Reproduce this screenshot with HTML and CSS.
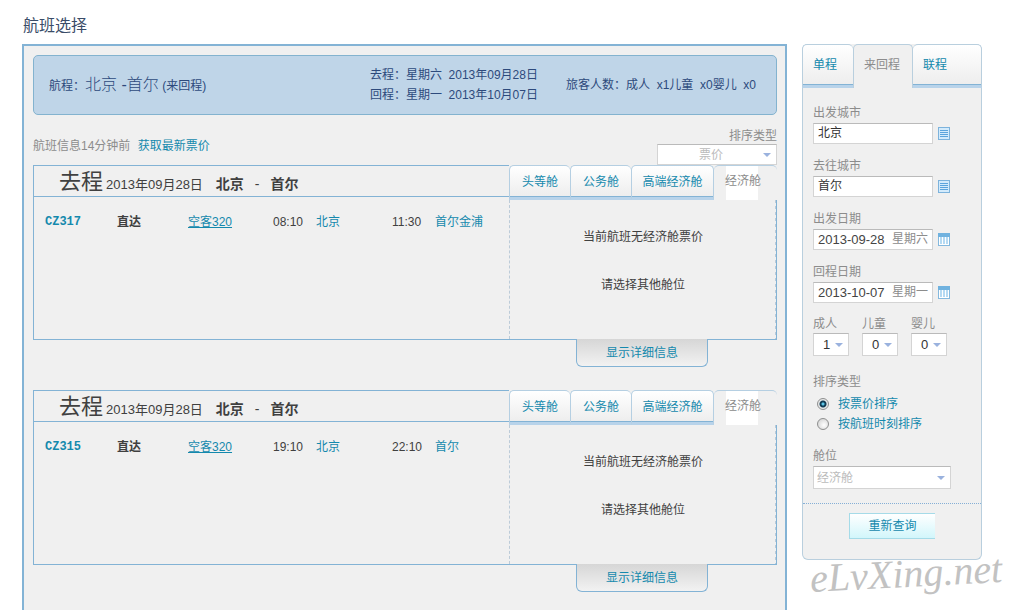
FILE: index.html
```html
<!DOCTYPE html>
<html lang="zh-CN">
<head>
	<meta charset="utf-8">
	<title>航班选择</title>
	<link rel="stylesheet" href="styles.css">
</head>
<body>
	<h1 class="title">航班选择</h1>
	<div class="page">
		<div class="main">
			<div class="summary">
				<div class="route">航程：<span class="city">北京 -首尔</span> (来回程)</div>
				<div class="dates">
					<p>去程：星期六&nbsp; 2013年09月28日</p>
					<p>回程：星期一&nbsp; 2013年10月07日</p>
				</div>
				<div class="people">旅客人数：成人&nbsp; x1儿童&nbsp; x0婴儿&nbsp; x0</div>
			</div>

			<div class="info">
				<p class="update">航班信息14分钟前 <a href="#">获取最新票价</a></p>
				<div class="sort">
					<label for="sort">排序类型</label>
					<div class="select">
						<select id="sort"><option>票价</option></select>
					</div>
				</div>
			</div>

			<div class="flight">
				<div class="card">
					<div class="left">
						<h2 class="head"><span class="way">去程</span><span class="day">2013年09月28日</span><span class="from">北京</span><span class="dash">-</span><span class="to">首尔</span></h2>
						<table class="list">
							<tr>
								<td class="c1"><a href="#" class="no">CZ317</a></td>
								<td class="c2"><b>直达</b></td>
								<td class="c3"><a href="#" class="plane">空客320</a></td>
								<td class="c4">08:10</td>
								<td class="c5"><a href="#">北京</a></td>
								<td class="c4">11:30</td>
								<td><a href="#">首尔金浦</a></td>
							</tr>
						</table>
					</div>
					<div class="right">
						<div class="cabin">
							<button type="button">头等舱</button>
							<button type="button">公务舱</button>
							<button type="button" class="wide">高端经济舱</button>
							<button type="button" class="on"><span>经济舱</span></button>
						</div>
						<div class="empty">
							<p>当前航班无经济舱票价</p>
							<p>请选择其他舱位</p>
						</div>
					</div>
				</div>
				<button type="button" class="detail">显示详细信息</button>
			</div>

			<div class="flight">
				<div class="card">
					<div class="left">
						<h2 class="head"><span class="way">去程</span><span class="day">2013年09月28日</span><span class="from">北京</span><span class="dash">-</span><span class="to">首尔</span></h2>
						<table class="list">
							<tr>
								<td class="c1"><a href="#" class="no">CZ315</a></td>
								<td class="c2"><b>直达</b></td>
								<td class="c3"><a href="#" class="plane">空客320</a></td>
								<td class="c4">19:10</td>
								<td class="c5"><a href="#">北京</a></td>
								<td class="c4">22:10</td>
								<td><a href="#">首尔</a></td>
							</tr>
						</table>
					</div>
					<div class="right">
						<div class="cabin">
							<button type="button">头等舱</button>
							<button type="button">公务舱</button>
							<button type="button" class="wide">高端经济舱</button>
							<button type="button" class="on"><span>经济舱</span></button>
						</div>
						<div class="empty">
							<p>当前航班无经济舱票价</p>
							<p>请选择其他舱位</p>
						</div>
					</div>
				</div>
				<button type="button" class="detail">显示详细信息</button>
			</div>
		</div>

		<div class="side">
			<form class="search">
				<div class="trip">
					<button type="button" class="t1">单程</button>
					<button type="button" class="t2 on">来回程</button>
					<button type="button" class="t3">联程</button>
				</div>
				<div class="fields">
					<div class="field">
						<label for="from">出发城市</label>
						<div class="line">
							<div class="box"><input type="text" id="from" value="北京"></div>
							<svg class="icon" width="12" height="13" viewBox="0 0 12 13"><rect x=".5" y=".5" width="11" height="12" fill="#d3ebfc" stroke="#7db3dc"/><path d="M2 3.5h8M2 5.5h8M2 7.5h8M2 9.5h8" stroke="#5ba4dc"/></svg>
						</div>
					</div>
					<div class="field">
						<label for="to">去往城市</label>
						<div class="line">
							<div class="box"><input type="text" id="to" value="首尔"></div>
							<svg class="icon" width="12" height="13" viewBox="0 0 12 13"><rect x=".5" y=".5" width="11" height="12" fill="#d3ebfc" stroke="#7db3dc"/><path d="M2 3.5h8M2 5.5h8M2 7.5h8M2 9.5h8" stroke="#5ba4dc"/></svg>
						</div>
					</div>
					<div class="field">
						<label for="go">出发日期</label>
						<div class="line">
							<div class="box"><input type="text" id="go" class="date" value="2013-09-28"><span class="week">星期六</span></div>
							<svg class="icon" width="12" height="13" viewBox="0 0 12 13"><rect x=".5" y=".5" width="11" height="12" fill="#fff" stroke="#85b9de"/><path d="M0 0h12v4H0z" fill="#70b2df"/><path d="M2 4h2v7H2zM5 4h2v7H5zM8 4h2v7H8z" fill="#b5daf3"/></svg>
						</div>
					</div>
					<div class="field">
						<label for="back">回程日期</label>
						<div class="line">
							<div class="box"><input type="text" id="back" class="date" value="2013-10-07"><span class="week">星期一</span></div>
							<svg class="icon" width="12" height="13" viewBox="0 0 12 13"><rect x=".5" y=".5" width="11" height="12" fill="#fff" stroke="#85b9de"/><path d="M0 0h12v4H0z" fill="#70b2df"/><path d="M2 4h2v7H2zM5 4h2v7H5zM8 4h2v7H8z" fill="#b5daf3"/></svg>
						</div>
					</div>
					<div class="nums">
						<div>
							<label for="adult">成人</label>
							<div class="select"><select id="adult"><option>1</option></select></div>
						</div>
						<div>
							<label for="child">儿童</label>
							<div class="select"><select id="child"><option>0</option></select></div>
						</div>
						<div>
							<label for="baby">婴儿</label>
							<div class="select"><select id="baby"><option>0</option></select></div>
						</div>
					</div>
					<div class="order">
						<p>排序类型</p>
						<label><input type="radio" name="order" checked>按票价排序</label>
						<label><input type="radio" name="order">按航班时刻排序</label>
					</div>
					<div class="seat">
						<label for="seat">舱位</label>
						<div class="select"><select id="seat"><option>经济舱</option></select></div>
					</div>
				</div>
				<div class="submit"><button type="submit">重新查询</button></div>
			</form>
			<div class="mark">eLvXing.net</div>
		</div>
	</div>
</body>
</html>
```
FILE: styles.css
```css
*{
	margin: 0;
	padding: 0;
	box-sizing: border-box;
}
body{
	background: #fff;
	color: #404040;
	font: 12px/18px "Liberation Sans", "Noto Sans CJK SC", sans-serif;
	padding: 14px 34px 0 22px;
}
a{
	color: #1489ad;
	text-decoration: none;
}
button,input,select{
	font: inherit;
	color: inherit;
	border: 0;
	background: none;
}
button{
	cursor: pointer;
	color: #1489ad;
}
.title{
	font-size: 16px;
	font-weight: normal;
	line-height: 24px;
	padding-left: 1px;
	color: #3a4c68;
}
.page{
	display: flex;
	align-items: flex-start;
	gap: 15px;
	margin-top: 6px;
}
.main{
	flex: 1;
	min-width: 0;
	border: 2px solid #83b3d5;
	border-bottom: 0;
	background: #f0f0f0;
	padding: 9px 8px 0 9px;
}

/*行程概要*/
.summary{
	display: flex;
	align-items: center;
	height: 60px;
	padding: 0 20px 0 15px;
	border: 1px solid #83b3cf;
	border-radius: 5px;
	background: #bfd5e8;
	color: #2d4a7c;
}
.route{
	flex: 1;
}
.city{
	font-size: 16px;
	font-weight: 300;
}
.dates{
	line-height: 20px;
	margin-right: 28px;
}

.info{
	display: flex;
	justify-content: space-between;
	align-items: flex-start;
	height: 50px;
	color: #8c8c8c;
}
.update{
	padding-top: 22px;
}
.update a{
	margin-left: 4px;
}
.sort{
	width: 120px;
	padding-top: 13px;
}
.sort label{
	display: block;
	line-height: 16px;
	text-align: right;
}
.sort .select{
	height: 21px;
	color: #bbb;
}
.sort select{
	padding-left: 41px;
}

/*下拉框*/
.select{
	position: relative;
	border: 1px solid #d4d4d4;
	border-top-color: #bababa;
	background: #fff;
}
.select select{
	display: block;
	width: 100%;
	height: 100%;
	appearance: none;
	outline: none;
}
.select:after{
	content: "";
	position: absolute;
	right: 5px;
	top: 50%;
	margin-top: -2px;
	border: 4px solid transparent;
	border-top-color: #9ab2de;
	border-bottom: 0;
	pointer-events: none;
}

/*航班*/
.flight{
	margin-bottom: 23px;
}
.flight:last-child{
	margin-bottom: 0;
	padding-bottom: 18px;
}
.card{
	display: flex;
	height: 175px;
	border-bottom: 1px solid #83b3d5;
}
.left{
	flex: 1;
	min-width: 0;
	border-left: 1px solid #83b3d5;
	border-top: 1px solid #83b3d5;
}
.head{
	height: 31px;
	line-height: 31px;
	padding-left: 25px;
	border-bottom: 1px solid #83b3d5;
	font-size: 14px;
	white-space: nowrap;
}
.way{
	font-size: 22px;
	font-weight: normal;
	margin-right: 3px;
}
.day{
	font-size: 13px;
	font-weight: normal;
	margin-right: 13px;
}
.dash{
	margin: 0 11px;
	font-weight: normal;
}
.list{
	width: 100%;
	table-layout: fixed;
	border-collapse: collapse;
	margin-top: 15px;
	white-space: nowrap;
}
.list .c1{
	width: 83px;
	padding-left: 11px;
}
.list .c2{
	width: 71px;
}
.list .c3{
	width: 85px;
}
.list .c4{
	width: 43px;
}
.list .c5{
	width: 76px;
}
.no{
	font-family: "Liberation Mono", monospace;
	font-weight: bold;
}
.plane{
	text-decoration: underline;
}
.right{
	width: 268px;
	display: flex;
	flex-direction: column;
}
.cabin{
	display: flex;
	height: 35px;
}
.cabin button{
	width: 61px;
	border: 1px solid #b5cfe2;
	border-bottom: 3px solid #b8d3ea;
	border-right: 0;
	border-radius: 5px 5px 0 0;
	background: linear-gradient(#fff, #ededed);
	box-shadow: inset 0 -1px #83b3d5;
}
.cabin .wide{
	width: 83px;
	border-right: 1px solid #b5cfe2;
}
.cabin .on{
	flex: 1;
	border: 0;
	border-top: 1px solid #b5cfe2;
	background: linear-gradient(#fff, #fff) 12px 0 / 32px 34px no-repeat;
	box-shadow: none;
	color: #8c8c8c;
	text-align: left;
	padding: 0 0 4px 11px;
}
.empty{
	flex: 1;
	border-left: 1px dashed #bccbd8;
	border-right: 1px solid #83b3d5;
	background: repeating-linear-gradient(#bccbd8 0 3px, #f0f0f0 3px 6px) right / 1px 100% no-repeat;
	padding-top: 28px;
	text-align: center;
}
.empty p{
	margin-bottom: 30px;
}
.detail{
	display: block;
	width: 132px;
	height: 28px;
	margin: -1px 69px 0 auto;
	padding-top: 1px;
	position: relative;
	border: 1px solid #83b3d5;
	border-top: 0;
	border-radius: 0 0 6px 6px;
	background: linear-gradient(#d6d6d6, #f2f2f2);
}

/*右侧查询*/
.side{
	width: 180px;
	position: relative;
}
.search{
	background: #f0f0f0;
	border: 1px solid #b9cfde;
	border-top: 0;
	border-radius: 6px;
	color: #8c8c8c;
}
.trip{
	display: flex;
	height: 44px;
	margin: 0 -1px;
}
.trip button{
	border: 1px solid #b9cfde;
	border-bottom: 3px solid #b8d3ea;
	border-radius: 5px 5px 0 0;
	background: linear-gradient(#fff, #ededed);
	box-shadow: inset 0 -1px #83b3d5;
	text-align: left;
	padding-left: 10px;
}
.trip .t1{
	width: 51px;
	border-right: 0;
}
.trip .t2{
	width: 60px;
	background: #f0f0f0;
	border-bottom: 0;
	padding-bottom: 3px;
	box-shadow: none;
	color: #8c8c8c;
}
.trip .t3{
	flex: 1;
	border-left: 0;
}
.fields{
	padding: 15px 10px 0;
}
.field{
	margin-bottom: 12px;
}
.field label,.seat label{
	display: block;
	line-height: 20px;
}
.line{
	display: flex;
	align-items: center;
	gap: 5px;
}
.box{
	display: flex;
	width: 120px;
	height: 21px;
	border: 1px solid #d4d4d4;
	border-top-color: #bababa;
	background: #fff;
	line-height: 19px;
}
.box input{
	flex: 1;
	min-width: 0;
	padding-left: 4px;
	outline: none;
	color: #333;
}
.box .date{
	font-size: 13px;
	color: #444;
}
.box .week{
	padding-right: 4px;
}
.nums{
	display: flex;
	gap: 13px;
	margin-bottom: 16px;
}
.nums label{
	display: block;
}
.nums .select{
	width: 36px;
	height: 23px;
	color: #333;
}
.nums select{
	padding-left: 9px;
	font-size: 13px;
}
.order label{
	display: flex;
	align-items: center;
	height: 20px;
	padding-left: 4px;
	color: #1489ad;
}
.order p{
	line-height: 20px;
	margin-bottom: 2px;
}
.order input{
	appearance: none;
	width: 12px;
	height: 12px;
	margin-right: 9px;
	border: 1px solid #8e8f8f;
	border-radius: 50%;
	background: radial-gradient(circle at 60% 60%, #fff, #ccc);
}
.order input:checked{
	background: radial-gradient(circle, #5cc5e6 0 1px, #123d55 2px 3px, #e8e8e8 4px);
}
.seat{
	margin-top: 12px;
}
.seat .select{
	width: 138px;
	height: 23px;
	color: #bbb;
}
.seat select{
	padding-left: 3px;
}
.submit{
	margin-top: 14px;
	padding: 9px 0 20px;
	border-top: 1px dotted #85afd6;
	text-align: center;
}
.submit button{
	display: block;
	width: 86px;
	height: 26px;
	margin: 0 auto;
	border: 1px solid #a5dbe8;
	border-right: 0;
	background: linear-gradient(#fff, #d2f6fb);
}
.mark{
	position: absolute;
	left: 8px;
	top: 508px;
	font: italic 40px/44px "Liberation Serif", serif;
	color: #c2c2c2;
	transform: rotate(-3deg);
}
```
